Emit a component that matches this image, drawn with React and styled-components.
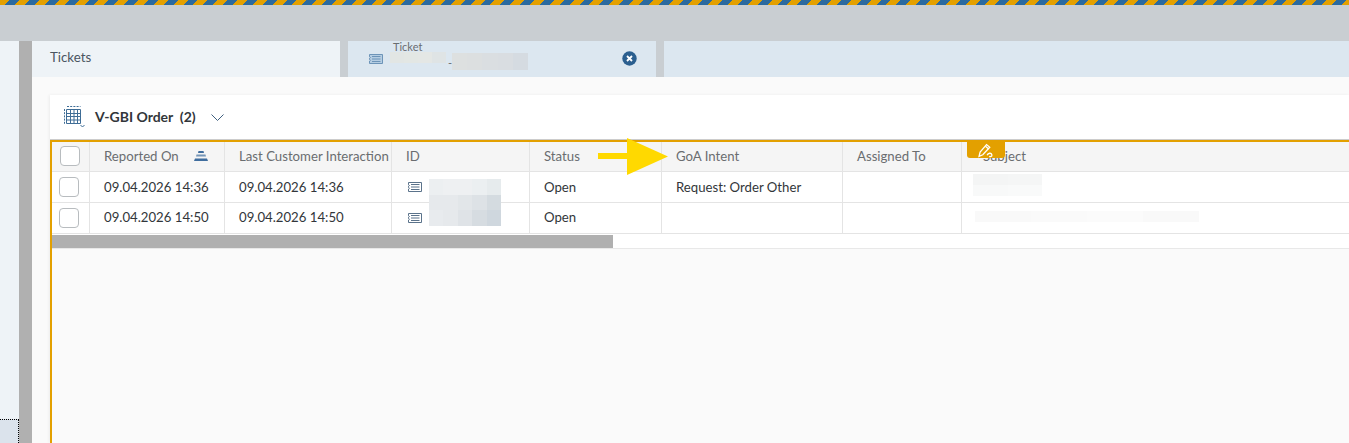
import React from "react";
import styled, { createGlobalStyle } from "styled-components";

const Global = createGlobalStyle`
  html, body { margin: 0; padding: 0; background: #fafafa; }
  body { font-family: Lato, "Noto Sans", "Liberation Sans", sans-serif; }
`;

const Page = styled.div`
  width: 1349px;
  height: 443px;
  overflow: hidden;
  display: flex;
  flex-direction: column;
  position: relative;
`;

const Stripe = styled.div`
  height: 5px;
  background: repeating-linear-gradient(135deg, #e3a000 0 7px, #2b6a9f 7px 14px);
`;

const Shell = styled.div`
  height: 36px;
  background: #c9ced2;
`;

const Body = styled.div`
  flex: 1;
  display: flex;
  min-height: 0;
`;

const Side = styled.div`
  width: 19px;
  background: #eef3f7;
  display: flex;
  flex-direction: column;
  justify-content: flex-end;
`;

const SideFocus = styled.div`
  height: 24px;
  background: #dbe3ec;
  border-top: 1px dotted #000;
  border-right: 1px dotted #000;
  box-sizing: border-box;
`;

const ScrollTrack = styled.div`
  width: 13px;
  background: #b0b0b0;
`;

const Main = styled.div`
  flex: 1;
  display: flex;
  flex-direction: column;
  min-width: 0;
`;

const Tabs = styled.div`
  height: 36px;
  display: flex;
  gap: 8px;
  background: #c9ced2;
`;

const Tab = styled.div`
  position: relative;
  width: 308px;
  flex: ${p => (p.$grow ? 1 : "none")};
  background: ${p => (p.$active ? "#eef3f7" : "#dce7f0")};
  box-sizing: border-box;
  display: flex;
  align-items: center;
  padding-left: ${p => (p.$active ? "18px" : "21px")};
  padding-bottom: ${p => (p.$active ? "5px" : "0")};
  font-size: 13.3px;
  color: #4a5561;
`;

const TabStack = styled.div`
  margin-left: 10px;
  display: flex;
  flex-direction: column;
  font-size: 11px;
  line-height: 12px;
  color: #6a6d70;
  height: 36px;
  box-sizing: border-box;
`;

const TabDash = styled.span`
  padding: 4px 0 0 55px;
  line-height: 12px;
`;

const CloseWrap = styled.div`
  position: absolute;
  left: 274px;
  top: 10px;
  display: flex;
`;

const Content = styled.div`
  flex: 1;
  padding: 18px 0 0 18px;
  min-height: 0;
`;

const Card = styled.div`
  height: 100%;
  background: #fff;
  display: flex;
  flex-direction: column;
  box-shadow: -1px 0 3px rgba(0, 0, 0, 0.06);
`;

const CardHead = styled.div`
  height: 44px;
  display: flex;
  align-items: center;
  padding-left: 13px;
  border-bottom: 1px solid #ccc;
`;

const Title = styled.div`
  margin-left: 10px;
  font-size: 14px;
  font-weight: 700;
  color: #32363a;
  white-space: pre;
  padding-bottom: 1px;
`;

const Chevron = styled.div`
  margin-left: 15px;
  display: flex;
`;

const Frame = styled.div`
  position: relative;
  flex: 1;
  background: #fafafa;
  border-top: 2px solid #e3a000;
  border-left: 2px solid #e3a000;
`;

const Grid = styled.div`
  display: grid;
  grid-template-columns: 38px 135px 167px 138px 132px 181px 119px 1fr;
  grid-template-rows: 30px 31px 31px;
  background: #fff;
`;

const HeadCell = styled.div`
  box-sizing: border-box;
  background: #f5f5f5;
  border-bottom: 1px solid #e4e4e4;
  border-right: ${p => (p.$last ? "none" : "1px solid #e4e4e4")};
  padding-left: ${p => (p.$check ? "8px" : p.$last ? "21px" : "14px")};
  padding-bottom: 1px;
  display: flex;
  align-items: center;
  font-size: 13.2px;
  color: #6a6d70;
  white-space: nowrap;
`;

const Cell = styled.div`
  box-sizing: border-box;
  background: #fff;
  border-bottom: 1px solid #e4e4e4;
  border-right: ${p => (p.$last ? "none" : "1px solid #e4e4e4")};
  padding-left: ${p => (p.$check ? "7px" : p.$icon ? "16px" : "14px")};
  padding-bottom: ${p => (p.$lift && !p.$check ? "3px" : "1px")};
  display: flex;
  align-items: center;
  font-size: 13.2px;
  color: #32363a;
  white-space: nowrap;
`;

const Box = styled.div`
  width: 20px;
  height: 20px;
  box-sizing: border-box;
  background: #fff;
  border: 1px solid #b8bcbf;
  border-radius: 4px;
`;

const SortIcon = styled.span`
  margin-left: 15px;
  display: flex;
`;

const HScroll = styled.div`
  height: 15px;
  padding-top: 1px;
  background: #fff;
  border-bottom: 1px solid #e8e8e8;
  box-sizing: border-box;
`;

const HThumb = styled.div`
  width: 561px;
  height: 13px;
  background: #b0b0b0;
`;

const Mosaic = styled.div`
  position: absolute;
  left: ${p => p.$x}px;
  top: ${p => p.$y}px;
  display: grid;
  grid-template-columns: repeat(${p => p.$cols}, ${p => p.$w}px);
  grid-auto-rows: ${p => p.$h}px;
`;

const Tile = styled.div`
  background: ${p => p.$c};
`;

const EditBadge = styled.div`
  position: absolute;
  left: 967px;
  top: 142px;
  width: 38px;
  height: 16px;
  background: #e3a000;
  border-radius: 0 0 3px 3px;
  display: flex;
  align-items: center;
  justify-content: center;
`;

const Arrow = styled.svg`
  position: absolute;
  left: 598px;
  top: 138px;
`;

const ListIcon = ({ color = "#5b738b", fill = "none" }) => (
  <svg width="14" height="10" viewBox="0 0 14 10" fill={fill} stroke={color} strokeWidth="1">
    <path d="M0.5 0.5H13.5V9.5H0.5V7L1.5 6.3L0.5 5.6V4.2L1.5 3.5L0.5 2.8Z" />
    <path d="M3 2.5H11.5M3 5H11.5M3 7.5H11.5" />
  </svg>
);

const TableIcon = () => (
  <svg width="22" height="22" viewBox="0 0 22 22" fill="none" stroke="#3f6d96" strokeWidth="1">
    <path d="M3.5 3.5H17.5V17.5H3.500Z" />
    <path d="M3.5 7.5H17.5M3.5 10.5H17.5M3.5 14H17.5M7.5 3.5V17.5M11 3.5V17.5M14.5 3.5V17.5" />
    <path d="M1.5 3V18M4 0.5H17.5" strokeDasharray="2 1.2" />
    <path d="M17.5 19L19.5 21L21.5 19" />
  </svg>
);

const rows = [
  ["09.04.2026 14:36", "09.04.2026 14:36", "Open", "Request: Order Other"],
  ["09.04.2026 14:50", "09.04.2026 14:50", "Open", ""],
];

const idBlur = [
  "#eceff1", "#eef0f2", "#eef0f2", "#ebeff1", "#e6ebed",
  "#e6e9ec", "#e6e9ec", "#e2e6e9", "#dde2e6", "#d4dbe0",
  "#e8ebee", "#e6e9ec", "#dfe3e7", "#d6dce1", "#cfd7de",
];
const tabBlur = ["#dde0e0", "#dcdfe0", "#dadee1", "#d9dde1", "#d5dbe1"];
const tabBlurSmall = ["#e2e6e4", "#e3e7e4", "#e4e7e5", "#dfe4e5"];
const subjBlurA = ["#f4f5f5", "#f5f6f6", "#f8f9f9", "#f9fafa"];
const subjBlurB = ["#f9f9f9", "#fafafa", "#fbfbfb", "#f9f9f9"];

const App = () => (
  <Page>
    <Global />
    <Stripe />
    <Shell />
    <Body>
      <Side>
        <SideFocus />
      </Side>
      <ScrollTrack />
      <Main>
        <Tabs>
          <Tab $active>Tickets</Tab>
          <Tab>
            <ListIcon color="#6d94b8" fill="#b5cde2" />
            <TabStack>
              Ticket
              <TabDash>-</TabDash>
            </TabStack>
            <CloseWrap>
              <svg width="15" height="15" viewBox="0 0 15 15">
                <circle cx="7.5" cy="7.5" r="7.2" fill="#2b5f8f" />
                <path d="M5 5L10 10M10 5L5 10" stroke="#fff" strokeWidth="1.8" />
              </svg>
            </CloseWrap>
          </Tab>
          <Tab $grow />
        </Tabs>
        <Content>
          <Card>
            <CardHead>
              <TableIcon />
              <Title>V-GBI Order  (2)</Title>
              <Chevron>
                <svg width="13" height="7" viewBox="0 0 13 7" fill="none" stroke="#3f5f7f" strokeWidth="1">
                  <path d="M0.5 0.5L6.5 6.5L12.5 0.5" />
                </svg>
              </Chevron>
            </CardHead>
            <Frame>
              <Grid>
                <HeadCell $check><Box /></HeadCell>
                <HeadCell>
                  Reported On
                  <SortIcon>
                    <svg width="14" height="10" viewBox="0 0 14 10" fill="#3f6d9e">
                      <path d="M4.5 0H9.5L10 2H4Z" />
                      <path d="M2.5 3.500H11.500L12 5.500H2Z" opacity="0.7" />
                      <path d="M1 7.500H13L14 10H0Z" />
                    </svg>
                  </SortIcon>
                </HeadCell>
                <HeadCell>Last Customer Interaction</HeadCell>
                <HeadCell>ID</HeadCell>
                <HeadCell>Status</HeadCell>
                <HeadCell>GoA Intent</HeadCell>
                <HeadCell>Assigned To</HeadCell>
                <HeadCell $last>Subject</HeadCell>
                {rows.map((r, i) => (
                  <React.Fragment key={r[0]}>
                    <Cell $check><Box /></Cell>
                    <Cell $lift={i === 1}>{r[0]}</Cell>
                    <Cell $lift={i === 1}>{r[1]}</Cell>
                    <Cell $icon><ListIcon /></Cell>
                    <Cell $lift={i === 1}>{r[2]}</Cell>
                    <Cell>{r[3]}</Cell>
                    <Cell />
                    <Cell $last />
                  </React.Fragment>
                ))}
              </Grid>
              <HScroll>
                <HThumb />
              </HScroll>
            </Frame>
          </Card>
        </Content>
      </Main>
    </Body>
    <Mosaic $x={390} $y={52} $cols={4} $w={14} $h={11}>
      {tabBlurSmall.map((c, i) => <Tile key={i} $c={c} />)}
    </Mosaic>
    <Mosaic $x={452} $y={53} $cols={5} $w={15.2} $h={17}>
      {tabBlur.map((c, i) => <Tile key={i} $c={c} />)}
    </Mosaic>
    <Mosaic $x={429} $y={179} $cols={5} $w={14.4} $h={15.6}>
      {idBlur.map((c, i) => <Tile key={i} $c={c} />)}
    </Mosaic>
    <Mosaic $x={973} $y={174} $cols={2} $w={34.5} $h={11}>
      {subjBlurA.map((c, i) => <Tile key={i} $c={c} />)}
    </Mosaic>
    <Mosaic $x={975} $y={211} $cols={4} $w={56} $h={11}>
      {subjBlurB.map((c, i) => <Tile key={i} $c={c} />)}
    </Mosaic>
    <EditBadge>
      <svg width="18" height="15" viewBox="0 0 16 14" fill="none" stroke="#fff" strokeWidth="1.2">
        <path d="M1.5 12.5L2.5 8.5L8.5 1.5L11.5 4L5 11Z" />
        <path d="M7.5 3L10.5 5.5" />
        <path d="M9 11.5C10 9 13 9 13.5 11C13.8 12.5 12 13 11 12.5" />
      </svg>
    </EditBadge>
    <Arrow width="70" height="38" viewBox="0 0 70 38">
      <path d="M0 15H29V0L70 18.500L29 37V21H0Z" fill="#ffd900" />
    </Arrow>
  </Page>
);

export default App;
